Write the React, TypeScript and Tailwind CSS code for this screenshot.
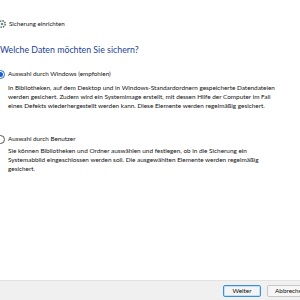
import React from "react";

export default function App() {
  const font = { fontFamily: 'Lato, "Open Sans", Arial, sans-serif' };
  return (
    <div className="w-[300px] h-[300px] bg-white overflow-hidden flex flex-col text-[#111]" style={font}>
      <div className="flex-1 flex flex-col">
        <div className="h-[18px]" />
        <div className="flex items-center gap-[2px] h-[12px] -ml-[3px]">
          <svg width="10" height="10" viewBox="0 0 10 10">
            <circle cx="5" cy="5" r="3.2" fill="none" stroke="#4a6b4a" strokeWidth="1.4" strokeDasharray="1.5 1" />
            <circle cx="5" cy="5" r="1.3" fill="#6a8a9a" />
          </svg>
          <span className="text-[6.2px] leading-[12px]">Sicherung einrichten</span>
        </div>
        <div className="h-[13px]" />
        <div className="text-[8.8px] leading-[14px] text-[#1c3f95]">Welche Daten möchten Sie sichern?</div>
        <div className="h-[12px]" />
        <div className="flex items-center gap-[3px] h-[10px] -ml-[4px]">
          <span className="w-[9px] h-[9px] rounded-full border border-[#2a6fc9] flex items-center justify-center bg-white">
            <span className="w-[5px] h-[5px] rounded-full bg-[#1b64c8]" />
          </span>
          <span className="text-[6.3px] leading-[10px]">Auswahl durch Windows (empfohlen)</span>
        </div>
        <div className="h-[4px]" />
        <p className="pl-[8px] text-[6.4px] leading-[9px] whitespace-nowrap">
          In Bibliotheken, auf dem Desktop und in Windows-Standardordnern gespeicherte Datendateien
          <br />
          werden gesichert. Zudem wird ein Systemimage erstellt, mit dessen Hilfe der Computer im Fall
          <br />
          eines Defekts wiederhergestellt werden kann. Diese Elemente werden regelmäßig gesichert.
        </p>
        <div className="h-[24px]" />
        <div className="flex items-center gap-[3px] h-[10px] -ml-[4px]">
          <span className="w-[9px] h-[9px] rounded-full border border-[#555] bg-white" />
          <span className="text-[6.3px] leading-[10px]">Auswahl durch Benutzer</span>
        </div>
        <div className="h-[2px]" />
        <p className="pl-[8px] text-[6.4px] leading-[9px] whitespace-nowrap">
          Sie können Bibliotheken und Ordner auswählen und festlegen, ob in die Sicherung ein
          <br />
          Systemabbild eingeschlossen werden soll. Die ausgewählten Elemente werden regelmäßig
          <br />
          gesichert.
        </p>
      </div>
      <div className="h-[20px] bg-[#f0f0f0] border-t border-[#e3e3e3] flex items-center gap-[6px] pl-[223px]">
        <button className="w-[38px] h-[12px] shrink-0 border border-[#3c8fd6] rounded-[2px] bg-[#f4f4f4] text-[6.4px] leading-[10px] flex items-center justify-center shadow-[inset_0_0_0_1px_#bfe0f7]">Weiter</button>
        <button className="w-[45px] h-[12px] shrink-0 border border-[#c8c8c8] rounded-[2px] bg-[#f6f6f6] text-[6.4px] leading-[10px] flex items-center justify-start pl-[7px] whitespace-nowrap">Abbrechen</button>
      </div>
    </div>
  );
}
